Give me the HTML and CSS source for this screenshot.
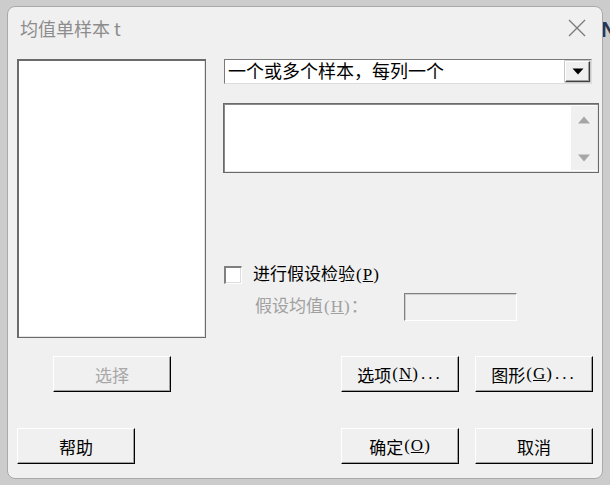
FILE: index.html
```html
<!DOCTYPE html>
<html lang="zh-CN">
<head>
<meta charset="utf-8">
<title>均值单样本 t</title>
<link rel="stylesheet" href="styles.css">
</head>
<body>
<div class="screen">
  <span class="behind">N</span>
  <div class="dialog">
    <div class="titlebar">
      <span class="title">均值单样本 t</span>
      <svg class="close" width="18" height="18" viewBox="0 0 18 18"><path d="M1 1 L17 17 M17 1 L1 17" stroke="#7a7a7a" stroke-width="1.3" fill="none"/></svg>
    </div>
    <div class="main">
      <div class="left">
        <div class="listbox"></div>
        <div class="select-wrap">
          <button class="btn disabled">选择</button>
        </div>
      </div>
      <div class="right">
        <div class="combo">
          <span class="combo-text">一个或多个样本，每列一个</span>
          <span class="combo-btn"><svg width="12" height="7" viewBox="0 0 12 7"><path d="M0.5 0.5 H11.5 L6 6.5 Z" fill="#000"/></svg></span>
        </div>
        <div class="textarea">
          <div class="scroll">
            <svg width="12" height="8" viewBox="0 0 12 8"><path d="M0 7.5 H12 L6 0.5 Z" fill="#a6a6a6"/></svg>
            <svg width="12" height="8" viewBox="0 0 12 8"><path d="M0 0.5 H12 L6 7.5 Z" fill="#a6a6a6"/></svg>
          </div>
        </div>
        <div class="check-row">
          <span class="checkbox"></span>
          <span class="label">进行假设检验<span class="lat">(<u>P</u>)</span></span>
        </div>
        <div class="hyp-row">
          <span class="label muted">假设均值<span class="lat">(<u>H</u>)</span>：</span>
          <span class="field"></span>
        </div>
        <div class="btn-row">
          <button class="btn">选项<span class="lat">(<u>N</u>)</span><span class="dots">...</span></button>
          <button class="btn">图形<span class="lat">(<u>G</u>)</span><span class="dots">...</span></button>
        </div>
      </div>
    </div>
    <div class="footer">
      <button class="btn">帮助</button>
      <div class="footer-right">
        <button class="btn">确定<span class="lat">(<u>O</u>)</span></button>
        <button class="btn">取消</button>
      </div>
    </div>
  </div>
</div>
</body>
</html>
```

FILE: styles.css
```css
html, body {
  margin: 0;
  padding: 0;
  background: #cccccc;
}
.screen {
  position: relative;
  width: 610px;
  height: 485px;
  overflow: hidden;
  padding-top: 6px;
  padding-left: 7px;
  box-sizing: border-box;
}
.behind {
  position: absolute;
  left: 601px;
  top: 17px;
  font-family: "Liberation Sans", sans-serif;
  font-weight: bold;
  font-size: 22px;
  color: #2e3550;
}
.dialog {
  position: relative;
  width: 596px;
  height: 473px;
  box-sizing: border-box;
  border: 1px solid #a9a9a9;
  border-radius: 8px;
  background: #f0f0f0;
  font-family: "Liberation Serif", "Noto Sans CJK SC", serif;
  font-size: 17px;
  color: #000;
}
.titlebar {
  height: 52px;
  display: flex;
  align-items: flex-start;
  justify-content: space-between;
  padding: 10px 16px 0 12px;
  box-sizing: border-box;
}
.title {
  font-family: "Noto Sans CJK SC", sans-serif;
  font-size: 18px;
  line-height: 22px;
  color: #8c8c8c;
}
.close {
  margin-top: 2px;
}
.main {
  display: flex;
  padding-left: 9px;
}
.left {
  width: 189px;
  display: flex;
  flex-direction: column;
}
.listbox {
  height: 279px;
  box-sizing: border-box;
  border: 1px solid #6a6a6a;
  box-shadow: inset 1px 1px 0 #6a6a6a, inset -1px -1px 0 #e4e4e4;
  background: #fff;
}
.select-wrap {
  padding-top: 18px;
  padding-left: 36px;
}
.right {
  width: 376px;
  margin-left: 17px;
  display: flex;
  flex-direction: column;
}
.combo {
  margin-left: 1px;
  width: 368px;
  height: 25px;
  box-sizing: border-box;
  border: 1px solid #7a7a7a;
  border-right-color: #dcdcdc;
  border-bottom-color: #dcdcdc;
  background: #fff;
  display: flex;
  align-items: center;
  justify-content: space-between;
  padding: 0 1px 0 3px;
}
.combo-text {
  font-size: 18px;
  line-height: 22px;
}
.combo-btn {
  width: 25px;
  height: 21px;
  box-sizing: border-box;
  border: 1px solid #fff;
  border-right-color: #404040;
  border-bottom-color: #404040;
  box-shadow: inset -1px -1px 0 #a0a0a0, 0 0 0 0.5px #909090;
  background: #f0f0f0;
  display: flex;
  align-items: center;
  justify-content: center;
}
.textarea {
  margin-top: 19px;
  height: 70px;
  box-sizing: border-box;
  border: 1px solid #6a6a6a;
  box-shadow: inset 1px 1px 0 #8a8a8a, inset -1px -1px 0 #e4e4e4;
  background: #fff;
  display: flex;
  justify-content: flex-end;
  padding: 2px 1px 2px 2px;
}
.scroll {
  width: 26px;
  background: #f0f0f0;
  display: flex;
  flex-direction: column;
  justify-content: space-between;
  align-items: center;
  padding: 10px 0 8px;
  box-sizing: border-box;
}
.check-row {
  margin-top: 93px;
  margin-left: 1px;
  display: flex;
  align-items: center;
  height: 18px;
}
.checkbox {
  width: 18px;
  height: 18px;
  box-sizing: border-box;
  border: 2px solid #808080;
  border-right: 1px solid #fff;
  border-bottom: 1px solid #fff;
  box-shadow: inset -1px -1px 0 #dcdcdc;
  background: #fff;
  margin-right: 11px;
}
.label {
  line-height: 22px;
}
.lat {
  letter-spacing: 1px;
  margin-left: 1px;
}
.dots {
  letter-spacing: 3px;
  margin-left: 2px;
}
.muted {
  color: #a0a0a0;
}
.hyp-row {
  margin-top: 9px;
  display: flex;
  align-items: center;
  height: 28px;
  padding-left: 32px;
}
.hyp-row .label {
  width: 149px;
}
.field {
  width: 113px;
  height: 28px;
  box-sizing: border-box;
  border: 1px solid #808080;
  border-right-color: #fff;
  border-bottom-color: #fff;
  box-shadow: inset 1px 1px 0 #cfcfcf;
  background: #f0f0f0;
}
.btn-row {
  margin-top: 35px;
  margin-left: 118px;
  display: flex;
  gap: 16px;
}
.btn {
  width: 118px;
  height: 36px;
  box-sizing: border-box;
  margin: 0;
  padding: 0;
  border: 1px solid #fff;
  border-right-color: #000;
  border-bottom-color: #000;
  box-shadow: inset -1px -1px 0 #a0a0a0;
  background: #f0f0f0;
  font-family: "Liberation Serif", "Noto Sans CJK SC", serif;
  font-size: 17px;
  color: #000;
  display: flex;
  align-items: center;
  justify-content: center;
}
.btn.disabled {
  color: #a8a8a8;
}
.footer {
  margin-top: 36px;
  padding-left: 9px;
  display: flex;
}
.footer-right {
  margin-left: 206px;
  display: flex;
  gap: 16px;
}
```
